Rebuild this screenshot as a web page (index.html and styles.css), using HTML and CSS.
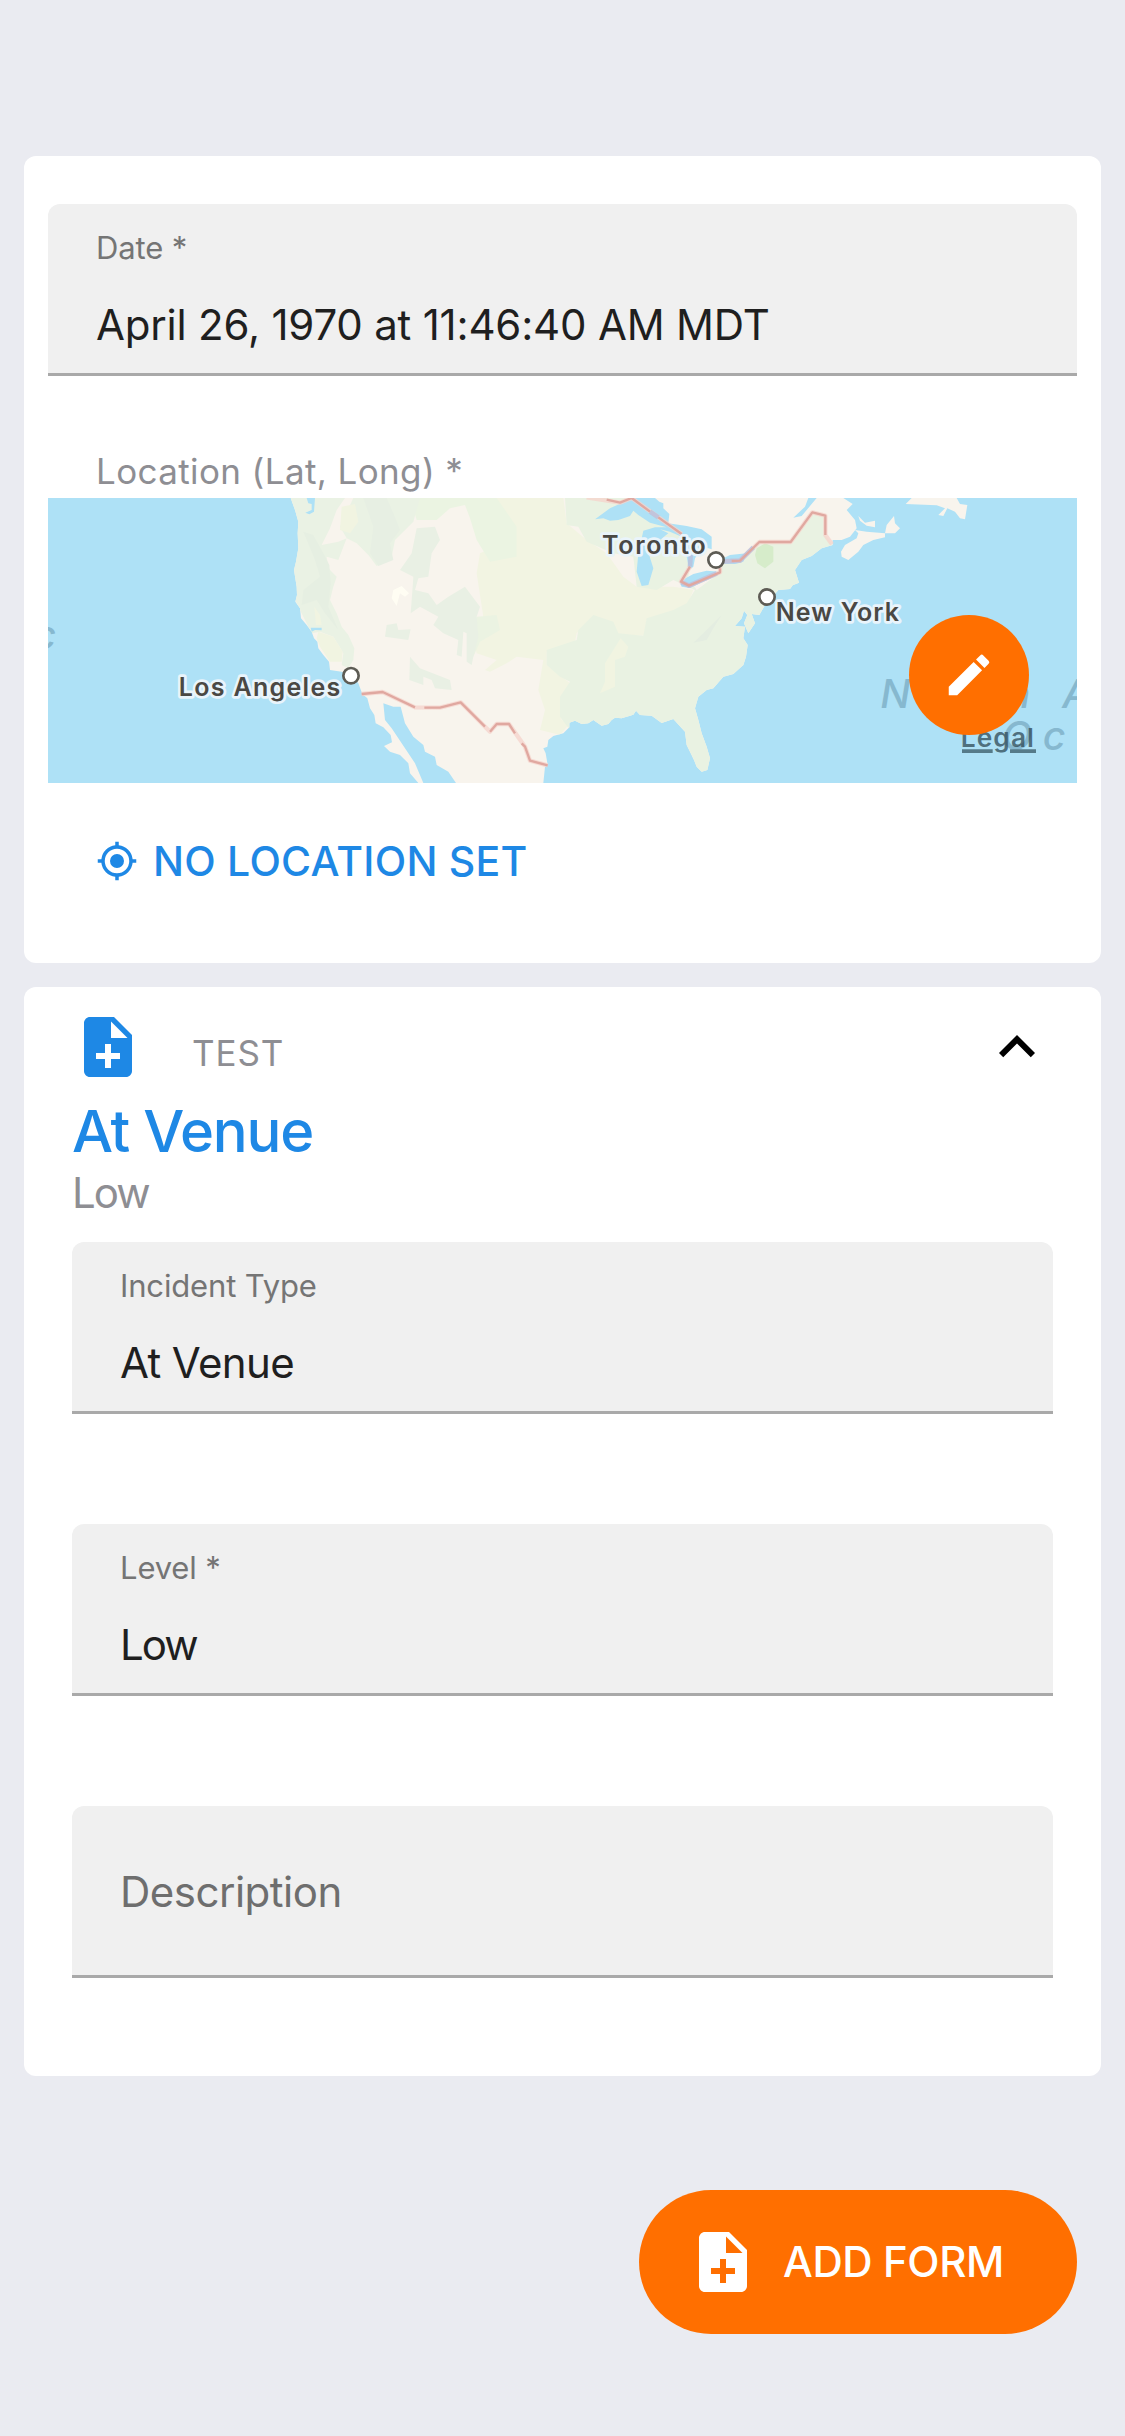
FILE: index.html
```html
<!DOCTYPE html>
<html lang="en">
<head>
<meta charset="utf-8">
<title>Observation</title>
<link rel="stylesheet" href="styles.css">
</head>
<body>
<main class="page">
  <section class="card card-main">
    <div class="field">
      <div class="field-label">Date *</div>
      <div class="field-value field-value-date">April 26, 1970 at 11:46:40 AM MDT</div>
    </div>
    <div class="location-label">Location (Lat, Long) *</div>
    <div class="map">
      <svg class="map-canvas" viewBox="24 24 3087 855">
        <defs>
          <path id="land" d="M752 24 765 60 775 95 773 130 775 175 768 215 762 240 770 290 771 315 766 335 780 355 783 385 800 405 815 425 822 445 832 455 835 475 850 495 867 515 870 540 905 545 940 560 955 580 967 612 982 625 990 655 1003 675 1007 700 1030 712 1052 735 1056 757 1032 768 1050 785 1080 795 1105 820 1110 850 1135 879H1150L1125 820 1085 760 1055 715 1035 690 1030 640 1060 650 1082 650 1095 700 1120 740 1150 765 1155 785 1185 800 1190 825 1225 845 1248 879H1510L1515 830 1523 825 1517 790 1510 775 1522 770 1525 750 1540 738 1570 730 1588 712 1588 698 1605 692 1625 702 1645 700 1660 690 1685 707 1705 702 1715 690 1725 683 1745 685 1780 674 1788 662 1800 675 1835 677 1865 699 1900 687 1935 725 1940 765 1950 785 1962 810 1970 830 1985 845 2002 840 2010 805 2000 770 1985 730 1975 690 1965 655 1975 620 2000 600 2020 595 2050 560 2080 552 2110 525 2118 500 2123 465 2110 445 2115 410 2085 408 2105 385 2112 362 2122 375 2112 400 2125 430 2145 400 2135 372 2158 375 2172 350 2215 300 2250 297 2258 286 2277 278 2265 240 2285 210 2315 198 2345 175 2378 165 2378 150 2405 150 2430 140 2450 115 2445 90 2420 60 2438 42 2410 24H2330L2285 78 2260 83 2295 50 2305 24Z"/>
          <clipPath id="land-clip"><use href="#land"/></clipPath>
        </defs>
        <use href="#land" fill="#f8f4ed"/>
        <g clip-path="url(#land-clip)">
          <!-- plains and prairies -->
          <path fill="#f2f4e2" d="M1370 24H1570L1580 100 1640 150 1700 190 1750 260 1790 290 1900 290 1960 300 1945 340 1900 385 1820 390 1815 437 1735 432 1715 395 1660 380 1610 430 1605 455 1520 485 1520 525 1565 560 1590 580 1560 630 1565 690 1590 700 1560 735 1500 720 1515 660 1495 600 1510 510 1430 500 1400 520 1350 545 1335 540 1370 510 1310 490 1290 400 1330 380 1310 250 1320 190 1410 150Z"/>
          <path fill="#ebf4e2" d="M1110 24H1370L1430 110 1430 200 1350 215 1310 150 1290 85 1275 45 1230 55 1190 90 1130 90Z"/>
          <path fill="#ebf3e2" d="M1310 380 1370 375 1380 420 1320 455 1300 500 1290 430Z"/>
          <!-- eastern forests -->
          <path fill="#e9f2e2" d="M1575 24H1780L1925 130 1955 200 1945 260 1970 300 2030 255 2050 215 2100 212 2155 156 2250 156 2317 67 2356 77 2356 135 2380 168 2400 400 2100 600 2050 879 1590 720 1560 680 1560 620 1590 575 1560 560 1520 525 1520 480 1610 450 1615 420 1660 375 1720 395 1735 430 1810 437 1820 385 1900 360 1940 340 1965 300 1900 270 1850 300 1790 290 1780 200 1720 190 1640 155 1615 110 1580 105Z"/>
          <path fill="#f1f4e1" d="M1742 445 1765 470 1755 500 1725 510 1725 590 1680 610 1695 575 1695 520Z"/>
          <path fill="#e4ede1" d="M2045 375 1990 430 1960 458 2000 450 2020 415Z"/>
          <!-- pacific north-west and the rockies -->
          <path fill="#eaf2e4" d="M740 24H915L890 60 870 115 845 165 895 155 920 145 895 210 860 200 865 235 890 260 880 290 870 330 890 370 905 410 925 435 943 475 940 510 925 535 905 525 910 490 880 440 840 425 815 430 750 300Z"/>
          <path fill="#e6efe2" d="M790 125 820 135 850 190 868 225 872 280 865 350 895 420 855 370 830 330 785 345 790 300 840 260 825 210Z"/>
          <path fill="#eaf2e4" d="M940 24H1140L1120 95 1065 150 1055 200 1010 228 985 195 950 160 920 145 900 110Z"/>
          <path fill="#e7efe3" d="M970 24H1040L1060 70 1080 120 1050 160 1060 210 1015 228 990 190 1000 110Z"/>
          <path fill="#f1f4e1" d="M905 50 945 42 955 95 930 130 900 120ZM835 425 880 440 908 485 905 515 870 515 840 470 830 445ZM823 350 840 375 845 405 828 405Z"/>
          <path fill="#e9f0e4" d="M1130 115 1185 110 1200 150 1175 190 1165 260 1135 265 1125 300 1165 310 1190 345 1225 320 1275 290 1320 350 1310 380 1315 440 1300 500 1295 525 1280 515 1280 430 1270 425 1265 500 1250 495 1255 450 1210 430 1180 405 1195 380 1140 350 1112 370 1118 290 1120 260 1080 240 1115 190ZM1110 500 1140 535 1230 570 1235 600 1185 595 1175 570 1150 560 1150 585 1108 570ZM1040 405 1070 400 1075 420 1112 418 1105 450 1035 440Z"/>
          <path fill="#fffdf3" d="M1060 300 1085 288 1107 310 1095 320 1080 310 1070 348 1055 325Z"/>
          <path fill="#d6ecca" d="M2150 175 2175 160 2200 170 2200 215 2175 235 2152 220 2145 195Z"/>
        </g>
        <g fill="#aee1f6">
          <path d="M800 24H825L822 65 808 73 796 68 815 60 815 42 805 40ZM812 413 845 413 845 421 825 420 815 425Z"/>
          <path d="M1665 88 1710 55 1765 30 1780 24H1845L1858 35 1870 40 1870 55 1888 72 1885 100 1940 108 1985 118 2015 140 2015 178 1990 170 1975 190 1965 205 1960 230 1948 240 1940 200 1925 140 1890 125 1860 118 1885 130 1860 150 1815 155 1840 235 1825 285 1805 288 1790 245 1795 190 1810 122 1845 112 1880 112 1830 98 1795 75 1780 62 1770 78 1735 90 1710 92 1690 85Z"/>
          <path d="M1918 275 1960 252 2000 242 2040 245 2040 252 1950 294 1925 290ZM2050 205 2070 195 2120 190 2110 215 2085 222 2050 222Z"/>
        </g>
        <g fill="#f8f4ed">
          <path d="M2403 185 2415 165 2450 145 2455 130 2445 120 2480 125 2535 130 2535 142 2500 150 2470 165 2455 185 2425 210 2405 200ZM2535 130 2540 105 2562 78 2565 100 2580 115 2565 130ZM2455 78 2475 98 2505 92 2505 112 2480 107 2460 92ZM2597 42 2615 24H2750L2760 42 2782 45 2775 88 2760 85 2745 65 2722 55 2710 78 2695 75 2715 55 2690 46Z"/>
        </g>
        <g fill="none" stroke-linejoin="round">
          <g stroke="#f6d3cb" stroke-opacity=".75" stroke-width="13">
            <path d="M965 612 1028 606 1125 652 1200 653 1262 637 1350 725 1370 702 1407 702 1455 770 1470 812 1523 826"/>
            <path d="M1640 22 1740 38 1775 24 1925 132"/>
            <path d="M1950 230 1923 275 1947 287 2040 247 2040 215 2100 212 2158 156 2252 156 2317 67 2356 77 2356 135 2376 163"/>
          </g>
          <g stroke="#b9bfdc" stroke-opacity=".8" stroke-width="14">
            <path d="M1830 65 1855 82M1952 195 1950 230M1925 277 1947 287 2030 250M2050 214 2100 212 2140 172"/>
          </g>
          <g stroke="#e0a8a0" stroke-width="7">
            <path d="M965 612 1028 606 1125 652M1153 653 1200 653 1262 637 1335 710M1350 725 1370 702 1407 702 1425 730M1445 760 1455 770 1470 812 1523 826"/>
            <path d="M1700 29 1740 38 1775 24 1830 65M1855 82 1925 132M1950 230 1923 275 1947 287 2040 247 2040 235M2075 213 2100 212 2158 156 2252 156 2317 67 2356 77 2356 135"/>
          </g>
        </g>
        <g class="ocean-name">
          <text x="-20" y="478">c</text>
          <text x="2521" y="655" letter-spacing="32">North Atlantic</text>
          <text x="2886" y="780" letter-spacing="31">Ocean</text>
        </g>
        <g class="city-name">
          <text x="416" y="618" textLength="485">Los Angeles</text>
          <text x="1686" y="192" textLength="311">Toronto</text>
          <text x="2207" y="392" textLength="370">New York</text>
        </g>
        <g fill="#fff" stroke="#5d5b54" stroke-width="8">
          <circle cx="933" cy="557" r="23"/>
          <circle cx="2028" cy="210" r="23"/>
          <circle cx="2181" cy="321" r="23"/>
        </g>
        <text class="legal" x="2762" y="770" textLength="220">Legal</text>
        <path class="legal-line" d="M2766 783.5H2858M2910 783.5H2988"/>
      </svg>
      <button class="edit-button" aria-label="Edit location">
        <svg viewBox="0 0 24 24"><path d="M3 17.25V21h3.75L17.81 9.94l-3.75-3.75L3 17.25zM20.71 7.04a1 1 0 0 0 0-1.41l-2.34-2.34a1 1 0 0 0-1.41 0l-1.83 1.83 3.75 3.75 1.83-1.83z"/></svg>
      </button>
    </div>
    <div class="location-row">
      <svg viewBox="0 0 24 24"><path d="M12 8a4 4 0 1 0 0 8 4 4 0 0 0 0-8zm8.94 3A8.994 8.994 0 0 0 13 3.06V1h-2v2.06A8.994 8.994 0 0 0 3.06 11H1v2h2.06A8.994 8.994 0 0 0 11 20.94V23h2v-2.06A8.994 8.994 0 0 0 20.94 13H23v-2h-2.06zM12 19a7 7 0 1 1 0-14 7 7 0 0 1 0 14z"/></svg>
      <span class="location-text">NO LOCATION SET</span>
    </div>
  </section>

  <section class="card card-form">
    <header class="form-header">
      <svg class="form-icon" viewBox="0 0 24 24"><path d="M14 2H6c-1.1 0-2 .9-2 2v16c0 1.1.9 2 2 2h12c1.1 0 2-.9 2-2V8l-6-6zm2 14h-3v3h-2v-3H8v-2h3v-3h2v3h3v2zm-3-7V3.500L18.500 9H13z"/></svg>
      <span class="form-name">TEST</span>
      <svg class="form-toggle" viewBox="0 0 24 24"><path d="M12 8l-6 6 1.410 1.410L12 10.830l4.590 4.580L18 14z"/></svg>
    </header>
    <h1 class="form-title">At Venue</h1>
    <p class="form-subtitle">Low</p>
    <div class="fields">
      <div class="field">
        <div class="field-label">Incident Type</div>
        <div class="field-value">At Venue</div>
      </div>
      <div class="field">
        <div class="field-label">Level *</div>
        <div class="field-value field-value-short">Low</div>
      </div>
      <div class="field field-empty">
        <div class="field-placeholder">Description</div>
      </div>
    </div>
  </section>

  <button class="add-button">
    <svg viewBox="0 0 24 24"><path d="M14 2H6c-1.1 0-2 .9-2 2v16c0 1.1.9 2 2 2h12c1.1 0 2-.9 2-2V8l-6-6zm2 14h-3v3h-2v-3H8v-2h3v-3h2v3h3v2zm-3-7V3.500L18.500 9H13z"/></svg>
    <span>ADD FORM</span>
  </button>
</main>
</body>
</html>
```
FILE: styles.css
```css
* { box-sizing: border-box; }

body {
  margin: 0;
  background: #eaebf1;
  font-family: Inter, "Liberation Sans", sans-serif;
}

svg { display: block; }

.page {
  width: 1125px;
  height: 2436px;
  padding: 156px 24px 0;
  display: flex;
  flex-direction: column;
  overflow: hidden;
}

.card {
  background: #fff;
  border-radius: 12px;
  flex: none;
}

.card-main {
  height: 807px;
  padding: 48px 24px 0;
}

.card-form {
  height: 1089px;
  margin-top: 24px;
  padding: 24px 48px 0;
}

.field {
  height: 172px;
  padding: 24px 48px 0;
  background: #f0f0f0;
  border-bottom: 3px solid #a9a9a9;
  border-radius: 12px 12px 0 0;
}

.field-label {
  font-size: 31px;
  line-height: 40px;
  letter-spacing: -.15px;
  color: #757575;
}

.field-value {
  margin-top: 32px;
  font-size: 42px;
  line-height: 50px;
  letter-spacing: -.65px;
  color: #1f1f1f;
}

.field-value-date { letter-spacing: -.2px; }

.field-value-short { letter-spacing: -2px; }

.field-empty {
  display: flex;
  align-items: center;
  padding-top: 2px;
}

.field-placeholder {
  font-size: 42px;
  line-height: 50px;
  letter-spacing: -.5px;
  color: #6e6e6e;
}

.location-label {
  margin: 73px 0 5px;
  padding-left: 48px;
  font-size: 35px;
  line-height: 44px;
  letter-spacing: .38px;
  color: #8e8e93;
}

.map {
  position: relative;
  height: 285px;
  background: #aee1f6;
  overflow: hidden;
}

.map-canvas {
  width: 1029px;
  height: 285px;
}

.city-name text {
  font-size: 75px;
  font-weight: 600;
  fill: #4a4844;
  stroke: #e9f4fb;
  stroke-width: 16px;
  stroke-linejoin: round;
  paint-order: stroke;
}

.ocean-name text {
  font-size: 119px;
  font-style: italic;
  font-weight: 500;
  fill: #86b8cf;
}

.legal {
  font-size: 79px;
  font-weight: 600;
  fill: #2b4450;
  fill-opacity: .72;
}

.legal-line {
  fill: none;
  stroke: #557a89;
  stroke-width: 11px;
}

.edit-button {
  position: absolute;
  right: 48px;
  top: 117px;
  width: 120px;
  height: 120px;
  padding: 0;
  border: 0;
  border-radius: 50%;
  background: #ff6f00;
  display: flex;
  align-items: center;
  justify-content: center;
}

.edit-button svg {
  width: 54px;
  height: 54px;
  fill: #fff;
}

.location-row {
  display: flex;
  align-items: center;
  gap: 15px;
  height: 60px;
  margin-top: 48px;
  padding-left: 48px;
  color: #1e88e5;
}

.location-row svg {
  width: 42px;
  height: 42px;
  fill: currentColor;
}

.location-text {
  font-size: 41px;
  font-weight: 500;
  line-height: 60px;
  letter-spacing: .25px;
}

.form-header {
  display: flex;
  height: 72px;
}

.form-icon {
  width: 72px;
  height: 72px;
  fill: #1e88e5;
}

.form-name {
  margin: 0 auto 0 48px;
  padding-top: 12px;
  font-size: 35px;
  line-height: 60px;
  letter-spacing: .9px;
  color: #8e8e93;
}

.form-toggle {
  width: 72px;
  height: 72px;
  fill: #000;
}

.form-title {
  margin: 15px 0 0;
  font-size: 58px;
  font-weight: 500;
  line-height: 66px;
  letter-spacing: -1.25px;
  color: #1e88e5;
}

.form-subtitle {
  margin: 4px 0 24px;
  font-size: 42px;
  line-height: 50px;
  letter-spacing: -2px;
  color: #8e8e93;
}

.fields {
  display: flex;
  flex-direction: column;
  gap: 110px;
}

.add-button {
  align-self: flex-end;
  flex: none;
  display: flex;
  align-items: center;
  gap: 24px;
  width: 438px;
  height: 144px;
  margin: 114px 24px 0 0;
  padding: 0 0 0 48px;
  border: 0;
  border-radius: 72px;
  background: #ff6f00;
  color: #fff;
  font-family: inherit;
  font-size: 42px;
  font-weight: 500;
  line-height: 60px;
  letter-spacing: -.4px;
  white-space: nowrap;
}

.add-button svg {
  width: 72px;
  height: 72px;
  fill: currentColor;
}
```
